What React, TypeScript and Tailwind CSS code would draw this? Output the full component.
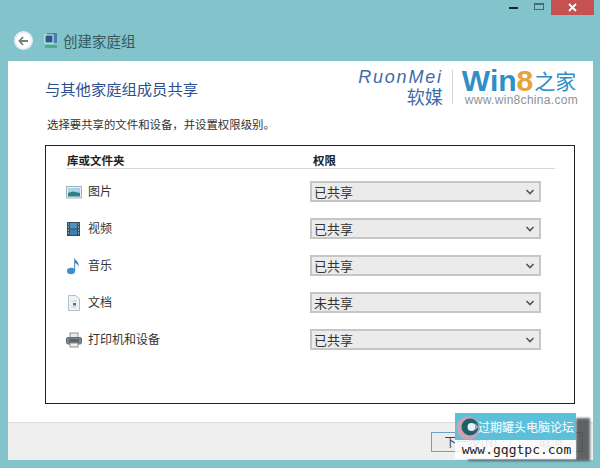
const FONT = "font-['Noto_Sans_CJK_SC','Liberation_Sans',sans-serif]";

const ROWS = [
  { icon: 'picture', label: '图片', value: '已共享' },
  { icon: 'video', label: '视频', value: '已共享' },
  { icon: 'music', label: '音乐', value: '已共享' },
  { icon: 'doc', label: '文档', value: '未共享' },
  { icon: 'printer', label: '打印机和设备', value: '已共享' },
];

function RowIcon({ type }: { type: string }) {
  if (type === 'picture') {
    return (
      <svg width="16" height="16" viewBox="0 0 16 16">
        <rect x="0.5" y="2.5" width="15" height="11.5" fill="#e4eef2" stroke="#9db7c2" />
        <rect x="2" y="4" width="12" height="5" fill="#a9d3e2" />
        <path d="M2 9 L7 7.5 L14 9 V12.5 H2 Z" fill="#2f7f86" />
      </svg>
    );
  }
  if (type === 'video') {
    return (
      <svg width="16" height="16" viewBox="0 0 16 16">
        <rect x="1" y="1" width="13" height="14" fill="#33505c" />
        <rect x="4" y="2" width="7" height="5.5" fill="#4f93c4" />
        <rect x="4" y="8.5" width="7" height="5.5" fill="#3a7fb0" />
        <path d="M2 3h1M2 6h1M2 9h1M2 12h1M12 3h1M12 6h1M12 9h1M12 12h1" stroke="#dfe8ec" strokeWidth="1.2" />
      </svg>
    );
  }
  if (type === 'music') {
    return (
      <svg width="16" height="18" viewBox="0 0 16 18">
        <ellipse cx="5" cy="14" rx="4" ry="3.2" fill="#3d8fcf" />
        <path d="M8.2 14 V1 C10 4 13.5 5 12.5 10 C12 7.5 10.5 6.5 9.2 6.2 V14 Z" fill="#3b86c0" />
      </svg>
    );
  }
  if (type === 'doc') {
    return (
      <svg width="16" height="16" viewBox="0 0 16 16">
        <path d="M2.5 0.5 H10 L13.5 4 V15.5 H2.5 Z" fill="#f1f4f6" stroke="#b4bec4" />
        <path d="M5 6h6M5 12h6" stroke="#c6ced3" />
        <rect x="7" y="8" width="3" height="2.5" fill="#5d6f7a" />
      </svg>
    );
  }
  return (
    <svg width="16" height="16" viewBox="0 0 16 16">
      <rect x="4" y="1" width="8" height="5" fill="#e8ebed" stroke="#8b9297" />
      <rect x="0.5" y="5.5" width="15" height="6.5" rx="1.5" fill="#7d858a" stroke="#666e73" />
      <path d="M3 8h10M3 10h10" stroke="#3f4548" />
      <rect x="4" y="11" width="8" height="4" fill="#eef0f1" stroke="#8b9297" />
    </svg>
  );
}

function Share({ value }: { value: string }) {
  return (
    <div className="flex h-[21px] w-[231px] items-center justify-between border-2 border-[#c6c6c6] bg-[#ebebeb] pl-[2px] pr-[4px] text-[13px] leading-none text-[#333]">
      <span>{value}</span>
      <svg width="10" height="8" viewBox="0 0 10 8">
        <path d="M1.5 2 L5 5.5 L8.5 2" fill="none" stroke="#555" strokeWidth="1.6" />
      </svg>
    </div>
  );
}

export default function App() {
  return (
    <div className={`relative flex h-[468px] w-[600px] flex-col overflow-hidden bg-[#82c3cc] pl-[8px] pr-[7px] pb-[8px] ${FONT}`}>
      {/* Title bar */}
      <div className="-mr-px flex h-[16px] justify-end">
        <div className="flex w-[27px] items-start justify-center pt-[7px]">
          <div className="h-[2px] w-[9px] bg-[#222]" />
        </div>
        <div className="flex w-[24px] items-start justify-center pt-[3px]">
          <div className="h-[7px] w-[10px] border border-[#4a6a72] border-t-[2px]" />
        </div>
        <div className="flex h-[15px] w-[43px] items-center justify-center bg-[#c75050]">
          <svg width="9" height="9" viewBox="0 0 9 9">
            <path d="M1 1 L8 8 M8 1 L1 8" stroke="#fff" strokeWidth="1.8" />
          </svg>
        </div>
      </div>

      {/* Nav bar */}
      <div className="flex h-[45px] items-start gap-[11px] pl-[6px] pt-[15px]">
        <div className="flex h-[19px] w-[19px] items-center justify-center rounded-full border-2 border-[#e8efef] bg-white">
          <svg width="11" height="10" viewBox="0 0 11 10">
            <path d="M5 1 L1.5 5 L5 9 M1.5 5 H10" fill="none" stroke="#7a7a7a" strokeWidth="1.8" />
          </svg>
        </div>
        <svg width="15" height="17" viewBox="0 0 15 17" className="mt-[1px]">
          <rect x="3" y="1" width="10" height="10" fill="#4a7fb0" />
          <rect x="1" y="3" width="8" height="8" fill="#1f5f8a" stroke="#e5eef2" />
          <rect x="1" y="13" width="12" height="3" fill="#45b27a" />
        </svg>
        <span className="-ml-[7px] text-[14.5px] leading-[20px] text-[#35595f]">创建家庭组</span>
      </div>

      {/* Content */}
      <div className="flex min-h-0 flex-1 flex-col bg-white">
        <div className="relative flex min-h-0 flex-1 flex-col pl-[37px] pr-[18px]">
          <div className="mt-[17px] text-[15.3px] leading-[20px] text-[#2b4f8f]">与其他家庭组成员共享</div>
          <div className="mt-[17px] pl-[2px] text-[11.4px] leading-[18px] text-[#333]">选择要共享的文件和设备，并设置权限级别。</div>

          {/* Logo */}
          <div className="absolute right-[15px] top-[6px] flex items-center">
            <div className="flex flex-col items-end pr-[9px]">
              <span className="font-['Liberation_Sans',sans-serif] text-[18px] italic leading-[18px] tracking-[1.8px] text-[#3f6ba8]">RuonMei</span>
              <span className="text-[18px] leading-[20px] text-[#3f6ba8]">软媒</span>
            </div>
            <div className="h-[34px] w-px bg-[#cfd5d8]" />
            <div className="flex flex-col pl-[9px]">
              <div className="flex h-[27px] items-center text-[30px] font-bold leading-[27px] text-[#2f8fc8]">
                <span className="font-['Liberation_Sans',sans-serif]">Win</span>
                <span className="font-['Liberation_Sans',sans-serif] text-[#e8a23a]">8</span>
                <span className="ml-[1px] text-[21px] font-normal">之家</span>
              </div>
              <span className="pl-[3px] font-['Liberation_Sans',sans-serif] text-[12px] leading-[13px] tracking-[0.3px] text-[#8a9299]">www.win8china.com</span>
            </div>
          </div>

          {/* Sharing table */}
          <div className="mt-[12px] h-[259px] border border-[#222] pl-[20px] pr-[19px] pt-[6px]">
            <div className="flex h-[17px] border-b border-[#d8d8d8] text-[11.5px] font-bold leading-[16px] text-[#222]">
              <div className="w-[247px] pl-px">库或文件夹</div>
              <div>权限</div>
            </div>
            <div className="mt-[12px] flex flex-col gap-[16px]">
              {ROWS.map((row) => (
                <div key={row.icon} className="flex h-[21px] items-center">
                  <div className="flex w-[22px] justify-center pr-[6px]">
                    <RowIcon type={row.icon} />
                  </div>
                  <div className="w-[222px] -translate-y-[1px] text-[12px] leading-none text-[#333]">{row.label}</div>
                  <Share value={row.value} />
                </div>
              ))}
            </div>
          </div>
        </div>

        {/* Footer */}
        <div className="flex h-[38px] shrink-0 items-start justify-end gap-[8px] border-t border-[#dcdcdc] bg-[#efefef] pr-[10px] pt-[9px]">
          <div className="flex h-[20px] w-[80px] items-center justify-center border border-[#6f9fc4] bg-[#ececec] text-[12px] text-[#444]">下一步(N)</div>
          <div className="flex h-[20px] w-[64px] items-center justify-center border border-[#acacac] bg-[#e6e6e6] text-[12px] text-[#555]">取消</div>
        </div>
      </div>

      {/* Watermark shadow */}
      <div className="absolute left-[468px] top-[418px] h-[43px] w-[122px] border-r-[14px] border-b-[2px] border-[#3c4042]/80 blur-[1px]" />

      {/* Forum watermark */}
      <div className="absolute left-[455px] top-[413px] flex h-[46px] w-[121px] flex-col">
        <div className="flex h-[27px] items-center justify-end bg-[#5dc0da] pr-[2px] text-[12px] text-white">过期罐头电脑论坛</div>
        <div className="flex flex-1 items-center justify-center bg-white/85 pl-[2px] font-['DejaVu_Sans_Mono',monospace] text-[13px] leading-none text-[#222]">www.gqgtpc.com</div>
        <svg width="24" height="24" viewBox="0 0 24 24" className="absolute left-[1px] top-[3px]">
          <circle cx="12" cy="12" r="11.5" fill="#c9a3b4" />
          <circle cx="14" cy="11" r="8.5" fill="#1f5e6b" />
          <circle cx="15.5" cy="11" r="4" fill="#e8f2f4" />
          <path d="M19 7 L23 11 L19 14 Z" fill="#5dc0da" />
        </svg>
      </div>
    </div>
  );
}
